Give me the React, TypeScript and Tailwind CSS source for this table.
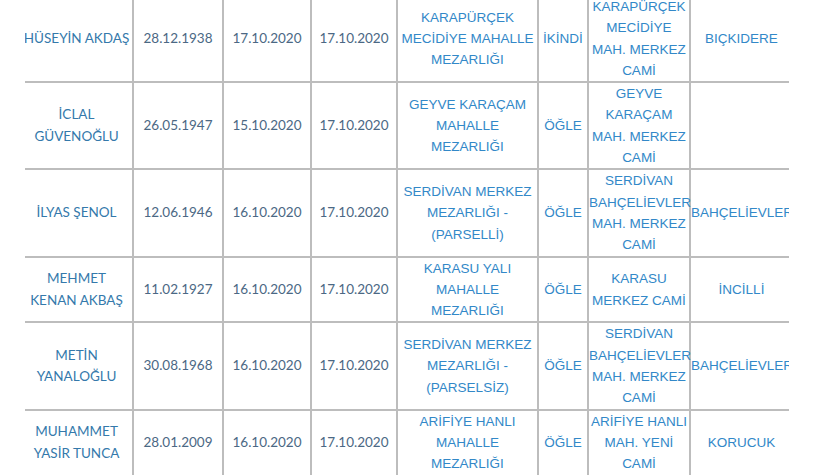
import React from 'react';

interface Burial {
  name: string;
  born: string;
  died: string;
  buried: string;
  cemetery: string;
  prayer: string;
  mosque: string;
  district: string;
}

const burials: Burial[] = [
  {
    name: 'HÜSEYİN AKDAŞ',
    born: '28.12.1938',
    died: '17.10.2020',
    buried: '17.10.2020',
    cemetery: 'KARAPÜRÇEK\nMECİDİYE MAHALLE\nMEZARLIĞI',
    prayer: 'İKİNDİ',
    mosque: 'KARAPÜRÇEK\nMECİDİYE\nMAH. MERKEZ\nCAMİ',
    district: 'BIÇKIDERE',
  },
  {
    name: 'İCLAL\nGÜVENOĞLU',
    born: '26.05.1947',
    died: '15.10.2020',
    buried: '17.10.2020',
    cemetery: 'GEYVE KARAÇAM\nMAHALLE\nMEZARLIĞI',
    prayer: 'ÖĞLE',
    mosque: 'GEYVE\nKARAÇAM\nMAH. MERKEZ\nCAMİ',
    district: '',
  },
  {
    name: 'İLYAS ŞENOL',
    born: '12.06.1946',
    died: '16.10.2020',
    buried: '17.10.2020',
    cemetery: 'SERDİVAN MERKEZ\nMEZARLIĞI -\n(PARSELLİ)',
    prayer: 'ÖĞLE',
    mosque: 'SERDİVAN\nBAHÇELİEVLER\nMAH. MERKEZ\nCAMİ',
    district: 'BAHÇELİEVLER',
  },
  {
    name: 'MEHMET\nKENAN AKBAŞ',
    born: '11.02.1927',
    died: '16.10.2020',
    buried: '17.10.2020',
    cemetery: 'KARASU YALI\nMAHALLE\nMEZARLIĞI',
    prayer: 'ÖĞLE',
    mosque: 'KARASU\nMERKEZ CAMİ',
    district: 'İNCİLLİ',
  },
  {
    name: 'METİN\nYANALOĞLU',
    born: '30.08.1968',
    died: '16.10.2020',
    buried: '17.10.2020',
    cemetery: 'SERDİVAN MERKEZ\nMEZARLIĞI -\n(PARSELSİZ)',
    prayer: 'ÖĞLE',
    mosque: 'SERDİVAN\nBAHÇELİEVLER\nMAH. MERKEZ\nCAMİ',
    district: 'BAHÇELİEVLER',
  },
  {
    name: 'MUHAMMET\nYASİR TUNCA',
    born: '28.01.2009',
    died: '16.10.2020',
    buried: '17.10.2020',
    cemetery: 'ARİFİYE HANLI\nMAHALLE\nMEZARLIĞI',
    prayer: 'ÖĞLE',
    mosque: 'ARİFİYE HANLI\nMAH. YENİ\nCAMİ',
    district: 'KORUCUK',
  },
];

export default function App() {
  return (
    <div className="bg-white w-[820px] h-[475px] overflow-hidden">
      <div className="ml-[25px] w-[764px] -mt-[4px] overflow-hidden">
        <table className="table-fixed border-collapse -ml-[4px] w-[771px]">
          <colgroup>
            <col className="w-[112px]" />
            <col className="w-[90px]" />
            <col className="w-[88px]" />
            <col className="w-[86px]" />
            <col className="w-[141px]" />
            <col className="w-[50px]" />
            <col className="w-[102px]" />
            <col className="w-[102px]" />
          </colgroup>
          <tbody>
            {burials.map((b, i) => {
              const top = i > 0 ? 'border-t-2' : '';
              const cell = `${top} border-[#bdbdbd] p-0 align-middle text-center whitespace-pre-line leading-[21.3px]`;
              const round = "font-['Lato',sans-serif] text-[13.5px]";
              const arial = "font-['Liberation_Sans',Arial,sans-serif] text-[13.5px] text-[#3288c8]";
              return (
                <tr key={i}>
                  <td className={`${cell} ${round} text-[#3479ab]`}>{b.name}</td>
                  <td className={`${cell} border-l-2 ${round} text-[#4b6884]`}>{b.born}</td>
                  <td className={`${cell} border-l-2 ${round} text-[#4b6884]`}>{b.died}</td>
                  <td className={`${cell} border-l-2 ${round} text-[#4b6884]`}>{b.buried}</td>
                  <td className={`${cell} border-l-2 ${arial}`}>{b.cemetery}</td>
                  <td className={`${cell} border-l-2 ${arial}`}>{b.prayer}</td>
                  <td className={`${cell} border-l-2 ${arial} whitespace-nowrap`}>{b.mosque.split('\n').map((l, k) => <div key={k}>{l}</div>)}</td>
                  <td className={`${cell} border-l-2 ${arial}`}>
                    <div className="whitespace-nowrap">{b.district}</div>
                  </td>
                </tr>
              );
            })}
          </tbody>
        </table>
      </div>
    </div>
  );
}
